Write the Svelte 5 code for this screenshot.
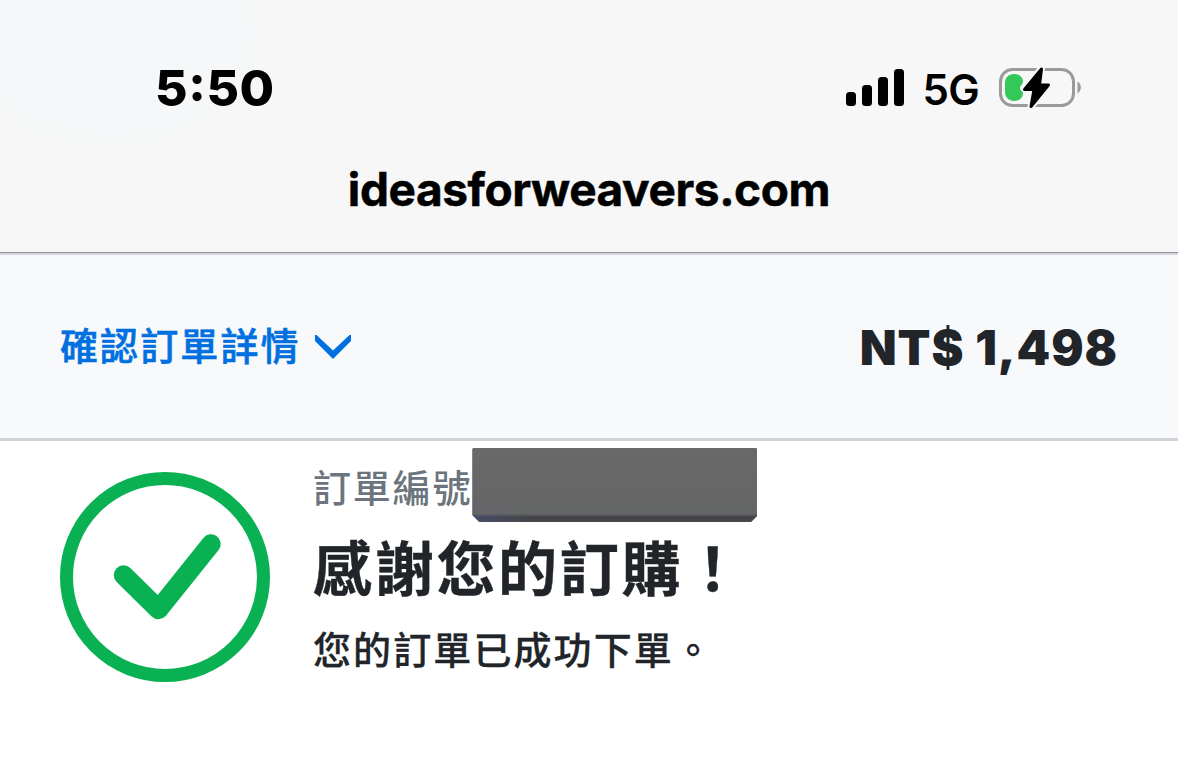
<script>
    const host = 'ideasforweavers.com'
    const total = 'NT$ 1,498'
    const bars = [14, 21, 29, 37]
</script>

<div class="screen">
    <header>
        <div class="status">
            <span class="time">5:50</span>
            <div class="right">
                <div class="signal">
                    {#each bars as h}
                        <i style="height: {h}px"></i>
                    {/each}
                </div>
                <span class="network">5G</span>
                <svg class="battery" width="84" height="42" viewBox="0 0 84 42">
                    <rect x="1.5" y="2.5" width="73" height="36" rx="12" fill="none" stroke="#9b9a9b" stroke-width="3" />
                    <path d="M78.500 14.500c4.500 2.500 4.500 9 0 12z" fill="#9b9a9b" />
                    <path d="M42.500 1.500 25.500 22.500h9.500L32 39.500 49.500 18H40.500z" fill="#f7f7f7" stroke="#f7f7f7" stroke-width="7" stroke-linejoin="round" />
                    <path d="M15 7c5 0 9 3 9 7s-3 4-3 7 3 3 3 5c0 5-4 8-9 8s-9-4-9-9v-9c0-5 3-9 9-9z" fill="#34c759" />
                    <path d="M42.500 2 25.500 22.500h9.500L32 39.500 49.500 18H40.500z" fill="#000" stroke="#000" stroke-width="3" stroke-linejoin="round" />
                </svg>
            </div>
        </div>
        <div class="host">{host}</div>
    </header>

    <section class="summary">
        <div class="toggle">
            <span>確認訂單詳情</span>
            <svg width="36" height="26" viewBox="0 0 36 26">
                <path d="M0 1v6l18 18L36 7V1h-1.500L18 16.500 1.500 1z" fill="#0070e0" />
            </svg>
        </div>
        <strong>{total}</strong>
    </section>

    <main>
        <svg class="check" width="210" height="210" viewBox="0 0 210 210">
            <circle cx="105" cy="105" r="98.5" fill="none" stroke="#0ab152" stroke-width="13" />
            <path d="M63.500 103l35 34.500 52.500-65.500" fill="none" stroke="#0ab152" stroke-width="19.5" stroke-linecap="round" stroke-linejoin="round" />
        </svg>
        <div class="text">
            <div class="order">訂單編號<span class="redacted"></span></div>
            <h1>感謝您的訂購！</h1>
            <p>您的訂單已成功下單。</p>
        </div>
    </main>
</div>

<style>
    :global(body) {
        background: #fff;
    }

    .screen {
        width: 1178px;
        height: 773px;
        overflow: hidden;
        font-family: Inter, 'Noto Sans CJK TC', sans-serif;
        color: #212529;
    }

    header {
        box-sizing: border-box;
        height: 253px;
        padding-top: 62px;
        border-bottom: 1px solid #929397;
        background: radial-gradient(ellipse 200px 150px at 110px 30px, #f3f7fa, #f7f7f7);
        color: #000;
    }

    .status {
        display: flex;
        align-items: center;
        justify-content: space-between;
        height: 52px;
        padding: 0 95px 0 155px;
    }

    .time {
        font-size: 50px;
        font-weight: 800;
        letter-spacing: 0.6px;
        font-feature-settings: 'case';
    }

    .right {
        display: flex;
        align-items: center;
    }

    .signal {
        display: flex;
        align-items: flex-end;
        gap: 6px;
        margin-top: -1px;
    }

    .signal i {
        width: 10px;
        border-radius: 3.5px;
        background: #000;
    }

    .network {
        margin: 2px 20px 0 19px;
        font-size: 42px;
        font-weight: 600;
        letter-spacing: -0.7px;
    }

    .battery {
        margin-top: -1px;
    }

    .host {
        margin-top: 47px;
        font-size: 46px;
        line-height: 56px;
        font-weight: 700;
        letter-spacing: -0.4px;
        text-align: center;
        -webkit-text-stroke: 0.5px #000;
    }

    .summary {
        box-sizing: border-box;
        display: flex;
        align-items: center;
        justify-content: space-between;
        height: 188px;
        padding: 0 60px;
        border-top: 2px solid #d3d6de;
        border-bottom: 3px solid #d1d2da;
        background: #f8f9fb;
    }

    .toggle {
        display: flex;
        align-items: center;
        gap: 14px;
        font-size: 38px;
        font-weight: 500;
        letter-spacing: 2.1px;
        color: #0070e0;
        -webkit-text-stroke: 0.6px #0070e0;
    }

    .toggle span {
        margin-top: -7px;
    }

    .summary strong {
        margin-top: 2px;
        font-size: 48px;
        font-weight: 900;
        letter-spacing: 0.9px;
        word-spacing: 0.5px;
    }

    main {
        display: flex;
        padding: 7px 60px 0;
    }

    .check {
        margin-top: 24px;
        flex: none;
    }

    .text {
        margin-left: 43px;
    }

    .order {
        display: flex;
        height: 75px;
        font-size: 38px;
        line-height: 80px;
        font-weight: 500;
        letter-spacing: 1.8px;
        color: #6c757d;
    }

    .redacted {
        width: 285px;
        height: 74px;
        background:
            linear-gradient(90deg, #4a569466, #4a569400 60px) bottom / 100% 7px no-repeat,
            linear-gradient(#69696a 0, #646566 66px, #434345 69px, #48484a);
        clip-path: polygon(0 1px, 1px 0, 284px 0, 100% 1px, 100% 68px, 279px 100%, 7px 100%, 0 67px);
    }

    h1 {
        margin: 0;
        font-size: 59px;
        line-height: 94px;
        font-weight: 700;
        letter-spacing: 2.7px;
        -webkit-text-stroke: 0.4px #212529;
    }

    p {
        margin: -1px 0 0;
        font-size: 38px;
        line-height: 68px;
        font-weight: 500;
        letter-spacing: 2.1px;
        -webkit-text-stroke: 0.3px #212529;
    }
</style>
